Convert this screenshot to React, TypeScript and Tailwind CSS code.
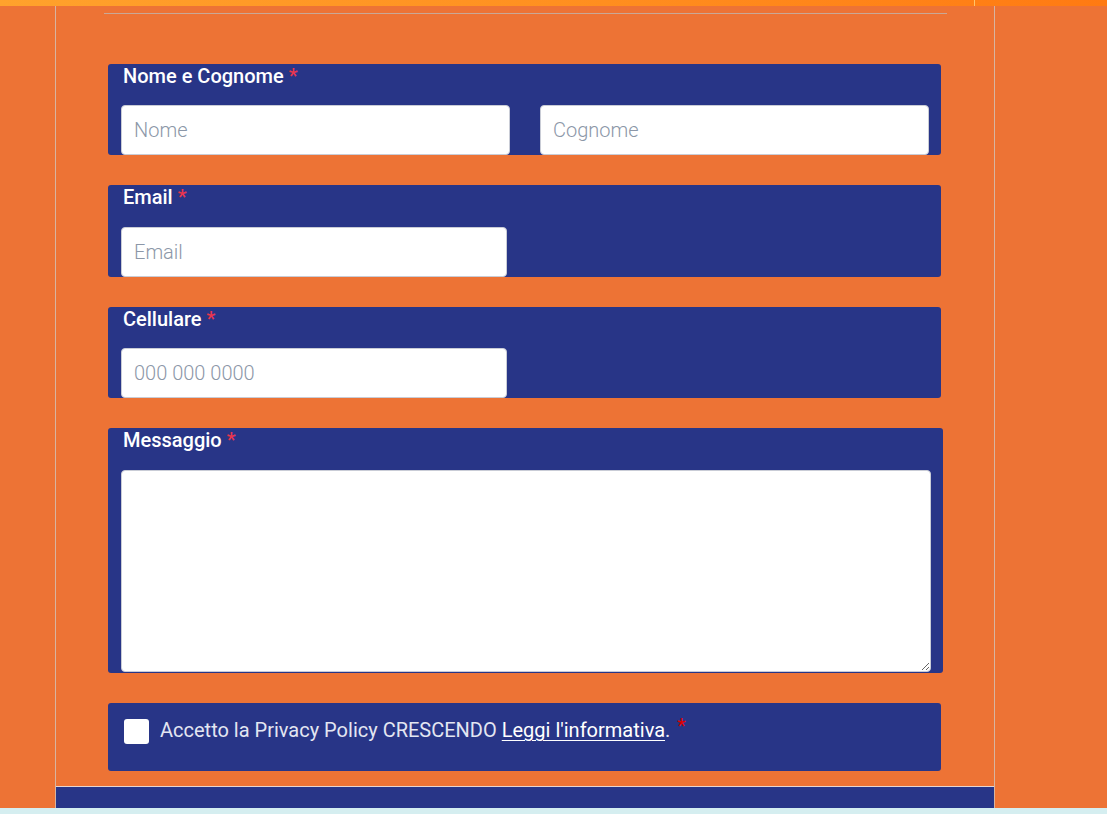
import React from "react";

const font = { fontFamily: "Roboto, 'Noto Sans', sans-serif" };

function Label({ text, h }: { text: string; h: string }) {
  return (
    <div className={`${h} pl-[15px] text-[20px] font-medium leading-[24px] text-white`}>
      {text} <span className="text-[#e8364f]">*</span>
    </div>
  );
}

function Input({ placeholder, className }: { placeholder: string; className: string }) {
  return (
    <input
      placeholder={placeholder}
      className={`h-[50px] rounded-[4px] border border-[#c9ccd6] bg-white px-[12px] text-[20px] font-light text-[#333] placeholder:text-[#8c97a8] outline-none ${className}`}
      style={font}
    />
  );
}

export default function App() {
  return (
    <div className="relative h-[814px] w-[1107px] overflow-hidden bg-[#ed7335]" style={font}>
      <div className="flex h-[6px] w-full bg-gradient-to-r from-[#ffa22c] via-[#ff9020] to-[#ff7a12]">
        <div className="w-[974px]" />
        <div className="w-px bg-[#ffc46a]" />
      </div>
      <div className="flex h-[802px]">
        <div className="w-[55px]" />
        <div className="flex w-[940px] flex-col border-x border-[#d7b4a0]">
          <div className="flex-1 px-[47px] pt-[7px]">
            <div className="ml-px h-px bg-[#c9a896]" />
            <div className="ml-[5px] mr-[6px] mt-[50px] flex flex-col gap-[30px]">
              <div className="rounded-[3px] bg-[#283587]">
                <Label text="Nome e Cognome" h="h-[41px]" />
                <div className="flex gap-[30px] pl-[13px] pr-[12px]">
                  <Input placeholder="Nome" className="w-[389px]" />
                  <Input placeholder="Cognome" className="w-[389px]" />
                </div>
              </div>
              <div className="rounded-[3px] bg-[#283587]">
                <Label text="Email" h="h-[42px]" />
                <div className="pl-[13px]">
                  <Input placeholder="Email" className="w-[386px]" />
                </div>
              </div>
              <div className="rounded-[3px] bg-[#283587]">
                <Label text="Cellulare" h="h-[41px]" />
                <div className="pl-[13px]">
                  <Input placeholder="000 000 0000" className="w-[386px]" />
                </div>
              </div>
              <div className="mr-[-2px] rounded-[3px] bg-[#283587] pb-px">
                <Label text="Messaggio" h="h-[42px]" />
                <div className="pl-[13px] pr-[12px]">
                  <textarea className="block h-[202px] w-full resize-y rounded-[4px] border border-[#c9ccd6] bg-white outline-none" />
                </div>
              </div>
              <div className="flex h-[68px] items-start rounded-[3px] bg-[#283587] pl-[16px] pt-[16px]">
                <div className="h-[25px] w-[25px] rounded-[3px] bg-white" />
                <div className="ml-[11px] mt-[-2px] text-[20px] leading-[26px] text-[#e3e6f2]">
                  Accetto la Privacy Policy CRESCENDO{" "}
                  <span className="underline decoration-1 underline-offset-[3px] text-white">Leggi l'informativa</span>.{" "}
                  <span className="relative top-[-4px] ml-[2px] text-[#e00000]">*</span>
                </div>
              </div>
            </div>
          </div>
          <div className="h-[22px] border-t border-[#e8d6d0] bg-[#283587]" />
        </div>
      </div>
      <div className="absolute bottom-0 left-0 h-[6px] w-full bg-[#d5eef0]" />
    </div>
  );
}
